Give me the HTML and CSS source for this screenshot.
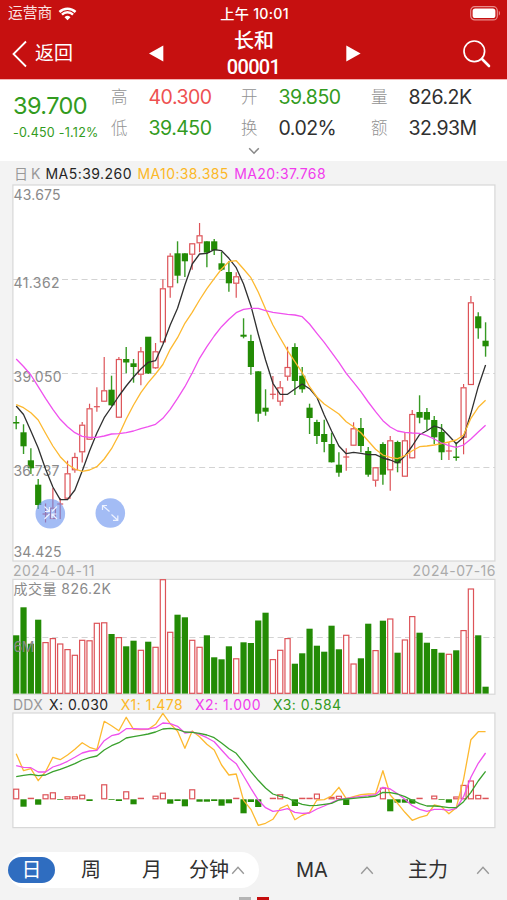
FILE: index.html
```html
<!DOCTYPE html>
<html lang="zh-CN">
<head>
<meta charset="utf-8">
<title>长和 00001</title>
<link rel="stylesheet" href="styles.css">
</head>
<body>
<div class="app">
  <header class="top">
    <div class="status">
      <div class="carrier"><span>运营商</span>
        <svg class="wifi" viewBox="0 0 19 14"><path d="M9.500 13.300 6.500 10.200a4.300 4.300 0 0 1 6 0zM4.800 8.500a6.800 6.800 0 0 1 9.400 0l1.700-1.800a9.200 9.200 0 0 0-12.800 0zM2.300 5.900a10.400 10.400 0 0 1 14.400 0l1.700-1.800a12.900 12.900 0 0 0-17.800 0z"/></svg>
      </div>
      <div class="clock">上午 10:01</div>
      <svg class="battery" viewBox="0 0 31 15"><rect x=".7" y=".7" width="26.6" height="13.2" rx="4"/><rect class="charge" x="2.6" y="2.5" width="22.8" height="9.6" rx="2.6"/><path d="M28.8 5v4.600c1.600-.5 1.600-4.100 0-4.600z" class="tip"/></svg>
    </div>
    <nav class="bar">
      <div class="back"><svg viewBox="0 0 16 28"><path d="M14 1.500 1.500 14 14 26.500"/></svg><span>返回</span></div>
      <svg class="arrow" viewBox="0 0 15 17"><path d="M0 8.500 14.300.5v16z"/></svg>
      <h1><span>长和</span><span class="code">00001</span></h1>
      <svg class="arrow" viewBox="0 0 15 17"><path d="M14.600 8.500.3.5v16z"/></svg>
      <svg class="search" viewBox="0 0 30 30"><circle cx="12.3" cy="12.3" r="10.3"/><path d="M20 20l7 7" class="handle"/></svg>
    </nav>
  </header>

  <section class="quote">
    <div class="last"><strong>39.700</strong><small>-0.450 -1.12%</small></div>
    <dl class="stats">
      <dt>高</dt><dd class="up">40.300</dd><dt>开</dt><dd class="down">39.850</dd><dt>量</dt><dd>826.2K</dd>
      <dt>低</dt><dd class="down">39.450</dd><dt>换</dt><dd>0.02%</dd><dt>额</dt><dd>32.93M</dd>
    </dl>
    <svg class="more" viewBox="0 0 12 8"><path d="M1.200 1.200 6 6.200l4.800-5"/></svg>
  </section>

  <main class="charts">
    <div class="legend"><span class="muted">日 K</span><span class="k5">MA5:39.260</span><span class="k10">MA10:38.385</span><span class="k20">MA20:37.768</span></div>
    <svg class="panel price" id="price" viewBox="12 184 484 378"></svg>
    <div class="dates"><span>2024-04-11</span><span>2024-07-16</span></div>
    <svg class="panel vol" id="volume" viewBox="12 578 484 117"></svg>
    <div class="legend ddx"><span class="muted">DDX</span><span class="k5">X: 0.030</span><span class="k10">X1: 1.478</span><span class="k20">X2: 1.000</span><span class="k3">X3: 0.584</span></div>
    <svg class="panel osc" id="ddx" viewBox="12 712 484 117"></svg>
  </main>

  <footer class="tools">
    <div class="periods"><b>日</b><span>周</span><span>月</span><span class="minute">分钟<svg class="caret" viewBox="0 0 14 9"><path d="M1.200 7.800 7 1.400l5.800 6.400"/></svg></span></div>
    <div class="pick ma"><span>MA</span><svg class="caret" viewBox="0 0 14 9"><path d="M1.200 7.800 7 1.400l5.800 6.400"/></svg></div>
    <div class="pick main"><span>主力</span><svg class="caret" viewBox="0 0 14 9"><path d="M1.200 7.800 7 1.400l5.800 6.400"/></svg></div>
    <div class="pager"><i></i><i class="on"></i></div>
  </footer>
</div>
<script src="chart.js"></script>
</body>
</html>
```
FILE: styles.css
```css
* { box-sizing: border-box; }
body { margin: 0; background: #f3f3f3; font-family: Inter, "Noto Sans CJK SC", sans-serif; color: #303030; }
svg { display: block; }
.app { width: 507px; height: 900px; overflow: hidden; display: flex; flex-direction: column; }

.top { height: 79px; background: #c61010; color: #fff; flex: none; }
.status { height: 27px; display: grid; grid-template-columns: 1fr auto 1fr; align-items: center; padding: 0 6px 0 8px; }
.carrier { display: flex; align-items: center; gap: 6px; font-size: 14.8px; line-height: 27px; color: #fbe3e3; }
.wifi { width: 19px; height: 14px; fill: #fff; }
.clock { font-size: 14.2px; font-weight: 500; line-height: 27px; letter-spacing: .25px; }
.battery { width: 31px; height: 15px; justify-self: end; fill: none; stroke: #e98b8b; stroke-width: 1.2; }
.battery .charge, .battery .tip { fill: #fff; stroke: none; }
.battery .tip { fill: #e98b8b; }
.bar { height: 52px; display: grid; grid-template-columns: 149px 15px 182px 15px 1fr; align-items: center; }
.back { display: flex; align-items: center; gap: 7px; padding: 1px 0 0 12px; font-size: 19px; line-height: 26px; }
.back svg { width: 16px; height: 28px; fill: none; stroke: #fff; stroke-width: 1.8; }
.arrow { width: 15px; height: 17px; fill: #fff; }
h1 { margin: 1px 2px 0 0; display: flex; flex-direction: column; align-items: center; font-size: 20px; font-weight: 500; line-height: 26px; }
h1 .code { font-family: Roboto, sans-serif; letter-spacing: -.7px; margin-left: -1px; }
.search { width: 30px; height: 30px; justify-self: end; margin-right: 15px; fill: none; stroke: #fff; stroke-width: 1.7; }
.search .handle { stroke-width: 2.6; stroke-linecap: round; }

.quote { height: 82px; background: #fff; flex: none; display: grid; grid-template: 67px 15px / 111px 1fr; border-top: 1px solid #f3b5b5; }
.last { padding: 12px 0 0 13px; color: #329b20; display: flex; flex-direction: column; white-space: nowrap; }
.last strong { font-size: 23.5px; font-weight: 400; line-height: 27px; letter-spacing: -.6px; }
.last small { font-size: 12.5px; line-height: 28px; letter-spacing: .25px; }
.stats { margin: 1px 0 0; display: grid; grid-template-columns: 37.5px 92.5px 37.5px 92.5px 37.5px 1fr; grid-auto-rows: 31px; line-height: 32px; }
dt { color: #929292; font-size: 16.5px; font-weight: 300; }
dd { margin: 0; font-size: 19.5px; letter-spacing: -.5px; }
.up { color: #ee5151; }
.down { color: #329b20; }
.more { grid-column: 1 / -1; width: 12px; height: 8px; margin: 0 auto; fill: none; stroke: #888; stroke-width: 1.5; }

.charts { flex: none; height: 668px; display: grid; grid-template-rows: 23px 378px 16px 117px 17px 117px; padding: 0 11px 0 12px; }
.panel { width: 484px; }
.price { height: 378px; }
.vol, .osc { height: 117px; }
.panel .frame { fill: #fff; stroke: #d8d8d8; stroke-width: 1.2; }
.grid { fill: none; stroke: #d3d3d3; stroke-dasharray: 6 3.8; }
.axis { fill: #8a8a8a; font-size: 14px; }
.legend { display: flex; padding-left: 2px; font-size: 14px; line-height: 25px; white-space: nowrap; gap: 5.5px; }
.legend span { letter-spacing: .4px; }
.legend .muted { letter-spacing: -.45px; }
.legend .k5, .ddx .k10, .ddx .k20, .ddx .k3 { letter-spacing: .45px; }
.ddx { line-height: 19px; padding-left: 1px; gap: 6px; }
.ddx .muted { letter-spacing: .25px; }
.muted { color: #999; }
.k5 { color: #252525; }
.k10 { color: #fcb827; }
.k20 { color: #f13bed; }
.k3 { color: #329b20; }
.ddx .k10, .ddx .k20, .ddx .k3 { margin-left: 6px; }
.dates { display: flex; justify-content: space-between; color: #ababab; font-size: 14px; line-height: 17px; padding: 0 0 0 1px; letter-spacing: .5px; }
.line { fill: none; stroke-width: 1.3; stroke-linejoin: round; }
.black { stroke: #303030; }
.orange { stroke: #fdb930; }
.pink { stroke: #ef51ee; }
.green { stroke: #3aa12d; }
.rise { fill: #fff; stroke: #dd5358; stroke-width: 1.2; }
.fall { fill: #238b05; }
.fallwick { stroke: #379a24; stroke-width: 1.4; }
.handle-dot { fill: #668fee; fill-opacity: .6; }
.handle-mark { fill: none; stroke: #edf2ff; stroke-width: 1.2; }

.tools { flex: 1; display: grid; grid-template: 36px 1fr / 251px 138px 1fr; padding: 23px 0 0 8px; }
.periods { background: #fff; border-radius: 18px; display: grid; grid-template-columns: 47px 72px 50px 82px; align-items: center; font-size: 20px; line-height: 36px; text-align: center; }
.periods b { height: 26px; line-height: 26px; border-radius: 13px; background: #2f6dc0; color: #fff; font-weight: 400; }
.minute { display: flex; align-items: center; gap: 2px; padding-left: 12px; }
.caret { width: 14px; height: 9px; flex: none; fill: none; stroke: #999; stroke-width: 1.4; }
.pick { display: flex; align-items: center; font-size: 20px; line-height: 37px; }
.ma { padding-left: 37px; gap: 32px; }
.main { padding-left: 11px; gap: 28px; }
.pager { grid-column: 1 / -1; display: flex; gap: 6px; padding: 9px 0 0 230.500px; }
.pager i { width: 12px; height: 4px; background: #b4b4b4; }
.pager .on { background: #c50d0d; }
```
FILE: chart.js
```js
const X0 = 16.2, STEP = 7.334;
const x = i => X0 + STEP * i;

// direction, high, body top, body bottom, low
const candles = `G416,422,423.5,429.3 G424.3,432.3,446.3,454 G448.3,460.3,468.3,474 G479,484.7,505,509
R503.5,514,514,522.5 R488,507.7,519,519 R498,504,504,519 R460.7,473.3,498.7,499 R452.7,457,470.3,472.7
R422,424.7,452.3,462.5 R403.7,408.3,439.7,440 R387.3,406.7,406.7,411.7 R357,390.3,401.7,402 G375.7,389.7,405.3,406
R357,359,417.7,418 G347,359,362.5,373.3 G359,363.3,367,382.7 R347,351.3,374.7,385.3 G337,336.7,373.5,374
R343,351.3,368.3,369 R279.3,288.3,342.3,343 R253.3,255.7,287.3,297.7 G241.3,253.3,275.7,283.3 G253.3,253.3,261.3,277
R243,243.3,254.7,269.7 R223,235.3,243.3,252.3 G241.3,241.3,252.7,267.3 G239,241.3,250.3,255 G252,263.3,269.7,271
G261,272,283.3,291.7 R272.3,276.3,283.7,297.7 G318.3,334.7,336.7,338.3 G334.7,341,367,374.7 G371.3,371.3,413.7,421.7
G389.3,407.7,411.7,415.7 R376,394.3,394.3,399.3 R381,387.3,401.7,405.7 R346.7,367,376.7,380.7 G343.3,347,381,395
G367,375.7,389.3,392.7 G403.7,407.7,418,434 G419.7,422,436,444 G419.7,434,442,452.3 G432.7,444,462.3,462.5
G452.3,464.7,472.7,476.7 R448.3,457,457,470.7 R422.3,428.3,445.7,446 G418,428,446,452.3 G447,451,474.7,476.7
R467,467.3,480.7,486.7 G442.3,444,474.7,484.7 R436,440.3,470.3,490.7 G440.7,442,463.3,472.3 R432.3,440.3,476.7,477
R410,414,458.3,458.5 G395.3,412,417.7,423.3 G408,412,419.7,430 G416,420,437.3,444.3 G424,432,452.3,460
R442.3,451,451,460 G442.3,456.5,458,460.7 R384,387.3,437.7,454.3 R296,302.3,385,385 G312.3,316.3,328.3,338.7
G322.3,340.7,346.3,356.7`.split(/\s+/).map(s => [s[0], ...s.slice(1).split(',').map(Number)]);

const ma5 = [406,414.5,431,448,469,487,499.7,499.7,490,471,451,433,417.7,407,396,386,377,369,362.3,360.7,344.5,325,308.3,285,264,254,253.3,249.7,250.7,258.3,267.7,284,305.7,334,360,383.3,394.3,394.3,389,384,388.7,397.3,415,431,446,453.7,452.3,453.3,454.7,454.7,458,460,463,456,446,434.7,430.7,426,428.3,435.7,443.7,437.3,413.3,386.7,365];
const ma10 = [404.7,407.7,412.7,420,433.3,446,456.7,464.3,469,471.3,470,466.7,459,448.7,435,419,405,392.7,382.7,374,364.5,349.3,337.7,323.3,312.3,300,288.7,278.7,269,261.7,260.7,269,277.7,292,309,325,338,350.7,361.7,372.7,386.7,397,404,409,414,421.7,426.7,432.7,441,449.3,455,457.3,458.7,455.7,450.7,446.7,446,445,443.7,442,440,435,418.3,407.3,400.3];
const ma20 = [359,366.5,375,386.7,398.3,409.3,419.3,426.7,432.7,436.3,437.3,437.3,436,434,433.7,432.7,431,428.7,426.7,424.3,418.3,409.3,398.3,386.7,373,358.3,346.7,336,326.7,319.3,312.7,309.3,308.3,308.3,310.7,312.3,313.3,314.3,315,316.7,324,333.3,342.3,352.3,362.3,373.3,382.3,391.7,402,411.7,420.7,427,431,432.3,433,433.3,435.7,439,443,445.7,447.3,445,439,432,425.3];

const volumes = [635.3,607.3,643.7,619.7,642.3,638.3,643.7,649.3,655,640,640.5,623,622.5,634,637.3,646.3,640.7,650,641.7,647,579.4,632,614.7,617.3,640,647,635.3,657.3,659.3,646.3,658.5,642.3,643,620.5,612.7,659.3,650,638.3,663.7,653.3,628.7,645.7,651.7,625.7,649.3,635,663.7,658.3,623.7,650.3,620.7,618.7,652.7,639.7,616.3,632.7,642.7,649,652.7,654,650.3,630.3,588.7,635.3,686.7];

const bars = [788.7,806.7,798,804.7,794.3,792.3,800,796.3,796.3,794.7,801,0,784.3,800,801,791.3,804.3,797.5,0,795.7,792.7,803.7,801,806.3,789.3,801.7,801.7,801,805.7,803.3,798,813.3,802,807,0,798,794.3,0,806,798,798,793.6,0,796.9,795.8,805,0,0,0,0,787.7,811.3,802.7,802.7,803.7,798,0,795.6,800,802.7,796.5,784.9,780.5,794.9,798];
const x1 = [753.7,770.7,768.7,780.7,771.7,757.3,759.7,755,749.3,742.7,747.3,749.7,721.3,725.7,730.7,717.3,729.3,729.7,729.3,724.3,713.4,723.7,731.3,748.3,731,736.7,744.3,750,765,775,774,800.3,809.3,825.3,823.3,819.3,808.3,805,819.7,815.3,812.3,800,799.7,796,787.3,798.7,796.7,794.7,794,793.7,770.7,795,803.3,812.3,820.3,817.3,815.3,805,806.7,813.7,807.7,779.3,739.7,731.7,731.7];
const x2 = [765.7,767.3,767.7,772,772,767,764.7,761.3,757.3,753,751,750.3,740.7,735.7,734,728.7,728.7,729,729,727.7,723,723.7,726.3,733,732,734.3,737.7,741.7,750,758,763.7,776,788.3,800,807.7,811.3,810.3,808.7,812.3,813.3,813,809,806,802.7,799.3,798.3,797.3,796.3,795.7,794.7,787.3,789,793.7,799.3,805.7,809.3,811.3,809.3,809.3,810.3,808.3,796.7,777.3,763.3,753];
const x3 = [776.7,775.3,774.3,775.7,775,771.7,769.3,766.7,763.7,760,757.7,756,750,745.7,742.7,738,736.7,735.3,734,732,729,728.3,729.3,732,732.3,733.3,735,737.7,743,748.7,753.3,762.3,771.7,780.3,788,794,796.3,798,801.7,804.3,805.7,805.3,804.3,803.3,800,799,798.3,797.7,797,796,792.3,792.7,794,796.7,800.3,803.7,806,806,806.7,807.7,807.7,801.7,792.3,781,771.3];

const rect = (cls, l, t, w, h) => `<rect class="${cls}" x="${l}" y="${t}" width="${w}" height="${h}"/>`;
const seg = (cls, xx, a, b) => `<path class="${cls}" d="M${xx} ${a}V${b}"/>`;
const line = (cls, ys) => `<polyline class="line ${cls}" points="${ys.map((y, i) => x(i) + ',' + y).join(' ')}"/>`;
const grid = y => `<path class="grid" d="M13 ${y}H495"/>`;
const label = (t, y, w) => `<text class="axis" x="13.5" y="${y}" textLength="${w}">${t}</text>`;
const frame = (t, h) => rect('frame', 12.9, t, 482, h);

const candleMarks = candles.map(([d, hi, t, b, lo], i) => {
  const c = x(i);
  if (d === 'G') return seg('fallwick', c, hi, lo) + rect('fall', c - 3.1, t, 6.2, b - t);
  if (t === b) return seg('rise', c, hi, lo) + `<path class="rise" d="M${c - 3} ${t}h6"/>`;
  return seg('rise', c, hi, t) + seg('rise', c, b, lo) + rect('rise', c - 2.5, t + .5, 5, b - t - 1);
}).join('');

document.getElementById('price').innerHTML =
  frame(185, 376) + [279.5, 373.5, 467.5].map(grid).join('') +
  candleMarks +
  label('43.675', 200, 47) + label('41.362', 287.5, 46) + label('39.050', 381.5, 48) + label('36.737', 475.5, 46) + label('34.425', 556.5, 48) +
  line('black', ma5) + line('orange', ma10) + line('pink', ma20) +
  `<circle class="handle-dot" cx="50.3" cy="513.7" r="14.8"/><circle class="handle-dot" cx="110.3" cy="513" r="14.8"/>
   <path class="handle-mark" d="M44.500 506.500l5 5m0-4.500v4.500h-4.500M57 519l-5-5m0 4.500v-4.500h4.500M57 506.500l-5 5M44.500 519l5-5"/>
   <path class="handle-mark" d="M102.500 505.500l7 6M111.500 514.500l6 5.500M102.500 510v-4.500h4.500M117.800 515.500v4.800h-4.800"/>`;

document.getElementById('volume').innerHTML =
  frame(579.4, 114.8) + grid(637.5) +
  volumes.map((t, i) => candles[i][0] === 'G'
    ? rect('fall', x(i) - 3.1, t, 6.2, 693.6 - t)
    : rect('rise', x(i) - 2.6, t + .3, 5.2, 693 - t)).join('') +
  label('成交量 826.2K', 593.5, 97.5) + label('6M', 651.5, 21);

document.getElementById('ddx').innerHTML =
  frame(713, 114.6) +
  bars.map((v, i) => {
    if (!v) return '';
    if (v > 799) return rect('fall', x(i) - 3.1, 799.3, 6.2, v - 799.3);
    return v > 797 ? rect('rise', x(i) - 2.5, 798.3, 5, .3) : rect('rise', x(i) - 2.5, v + .5, 5, 798.3 - v);
  }).join('') + line('orange', x1) + line('pink', x2) + line('green', x3);
```
